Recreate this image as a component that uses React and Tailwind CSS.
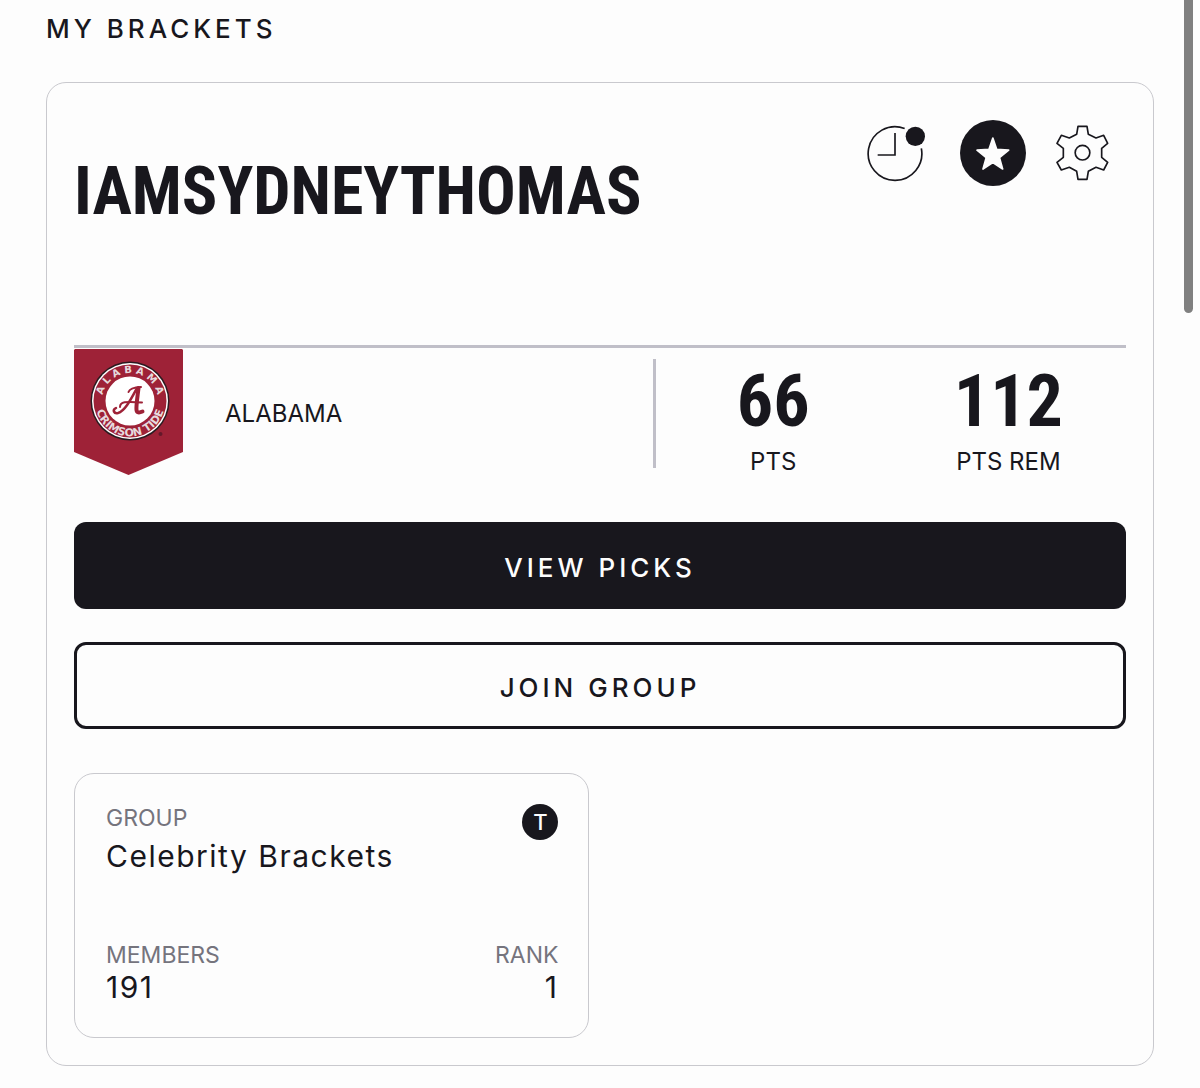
const GROUPS = [{ name: 'Celebrity Brackets', members: 191, rank: 1, badge: 'T' }]

const STATS = [
  { value: 66, label: 'PTS' },
  { value: 112, label: 'PTS REM' },
]

function ClockIcon() {
  return (
    <svg viewBox="52 70 177 174" className="w-[59px] h-[58px]" fill="none" stroke="#18171d" strokeWidth="5">
      <path d="M165 83.500A80.500 80.500 0 1 0 215 143" />
      <path d="M136 97V163H84" />
      <circle cx="197" cy="107" r="29" fill="#18171d" stroke="none" />
    </svg>
  )
}

function StarIcon() {
  return (
    <svg viewBox="380 109 102 99" className="w-[34px] h-[33px]" fill="#fdfdfd" stroke="#fdfdfd" strokeWidth="5" strokeLinejoin="round">
      <path d="M430.500 112L442 146L478 148.500L450.500 171L460 205L430.500 186L401 205L410.500 171L383 148.500L419 146Z" />
    </svg>
  )
}

function GearIcon() {
  return (
    <svg viewBox="618 75 159 168" className="w-[53px] h-[56px]" fill="none" stroke="#18171d" strokeWidth="5" strokeLinejoin="round">
      <path d="M684 79H711L715 103L738 114L761 106L773 130L755 145V172L773 187L761 210L738 202L715 214L711 238H684L680 214L658 202L634 210L621 187L640 172V145L621 130L634 106L658 114L680 103Z" />
      <circle cx="697.500" cy="158" r="22" />
    </svg>
  )
}

function TeamFlag() {
  return (
    <svg viewBox="0 0 109 126" className="mt-px h-[126px] w-[109px] shrink-0" role="img" aria-label="Alabama Crimson Tide">
      <defs>
        <path id="arcTop" d="M28.650 58A28 28 0 1 1 83.350 58" />
        <path id="arcBottom" d="M22 44A35 35 0 1 0 90 44" />
      </defs>
      <path d="M1 0H108L109 1V103L54.500 126L0 103V1Z" fill="#9e2237" />
      <circle cx="56" cy="52" r="39.500" fill="#2b1b20" />
      <circle cx="56" cy="52" r="38" fill="#fff" />
      <circle cx="56" cy="52" r="36.500" fill="#9e2237" />
      <circle cx="56" cy="52" r="24.500" fill="#fff" />
      <g fill="#e6dadd" fontFamily="DejaVu Sans" fontWeight="700" fontSize="10" textAnchor="middle">
        <text><textPath href="#arcTop" startOffset="50%">A L A B A M A</textPath></text>
        <text fontSize="11"><textPath href="#arcBottom" startOffset="50%">CRIMSON TIDE</textPath></text>
      </g>
      <g fill="none" stroke="#9e2237" strokeLinecap="round" strokeLinejoin="round">
        <path d="M42 59C38 61 40 65 44 64C51 62 57 50 63 39" strokeWidth="2.500" />
        <path d="M64.500 39C63.500 48 62 57 62.500 61Q63 65 68.500 62.500" strokeWidth="4" />
        <path d="M46 58C46 53 51 52 68 53.500" strokeWidth="2" />
        <path d="M54.500 43Q56 38.500 67 38" strokeWidth="2" />
      </g>
      <circle cx="86.500" cy="85" r="2" fill="#64182a" />
    </svg>
  )
}

function GroupCard({ group }) {
  return (
    <article className="w-[49%] rounded-[20px] border border-[#c9c9ce] pt-[30px] pr-[30px] pb-8 pl-[31px]">
      <div className="flex items-start justify-between">
        <div>
          <p className="text-[23px] leading-7 text-[#75747d]">GROUP</p>
          <h3 className="text-3xl leading-[48px] tracking-wider">{group.name}</h3>
        </div>
        <span className="flex size-9 items-center justify-center rounded-full bg-[#18171d] text-[22px] font-medium text-[#fdfdfd]">{group.badge}</span>
      </div>
      <dl className="mt-[61px] flex justify-between">
        <div>
          <dt className="text-[23px] leading-7 text-[#75747d]">MEMBERS</dt>
          <dd className="text-3xl leading-9 tracking-wider">{group.members}</dd>
        </div>
        <div className="text-right">
          <dt className="text-[23px] leading-7 text-[#75747d]">RANK</dt>
          <dd className="text-3xl leading-9 tracking-wider">{group.rank}</dd>
        </div>
      </dl>
    </article>
  )
}

export default function App() {
  return (
    <div className="relative min-h-screen bg-[#fdfdfd] px-[46px] pt-3 pb-[22px] font-['Inter','Liberation_Sans',sans-serif] text-[#18171d]">
      <h1 className="text-[26px] leading-[34px] font-medium tracking-[4px]">MY BRACKETS</h1>

      <section className="mt-9 rounded-[20px] border border-[#c9c9ce] px-[27px] pb-[27px]">
        <header className="flex h-[262px] items-start justify-between">
          <h2 className="pt-[73px] font-['Roboto_Condensed','Liberation_Sans_Narrow',sans-serif] text-[66px] leading-[72px] font-bold">IAMSYDNEYTHOMAS</h2>
          <div className="flex items-center pt-[37px] pr-[17px]">
            <button type="button" aria-label="Upcoming"><ClockIcon /></button>
            <button type="button" aria-label="Favorite" className="ml-[34px] flex size-[66px] items-center justify-center rounded-full bg-[#18171d]"><StarIcon /></button>
            <button type="button" aria-label="Settings" className="ml-[30px]"><GearIcon /></button>
          </div>
        </header>

        <div className="flex h-[177px] items-start border-t-3 border-[#c0bfc8]">
          <div className="flex flex-1 items-center">
            <TeamFlag />
            <span className="ml-[42px] pt-1 text-2xl">ALABAMA</span>
          </div>
          <dl className="mt-[11px] grid h-[109px] w-[45%] grid-cols-2 border-l-3 border-[#c0bfc8] text-center">
            {STATS.map(s => (
              <div key={s.label} className="flex flex-col-reverse justify-end">
                <dt className="mt-2.5 text-2xl leading-7">{s.label}</dt>
                <dd className="mt-[7px] font-['Roboto_Condensed','Liberation_Sans_Narrow',sans-serif] text-7xl leading-[72px] font-bold">{s.value}</dd>
              </div>
            ))}
          </dl>
        </div>

        <button type="button" className="h-[87px] w-full rounded-xl bg-[#18171d] pt-1 text-[26px] font-medium tracking-[4px] text-[#fdfdfd]">VIEW PICKS</button>
        <button type="button" className="mt-[33px] h-[87px] w-full rounded-xl border-3 border-[#18171d] pt-1 text-[26px] font-medium tracking-[4px]">JOIN GROUP</button>

        <div className="mt-[44px]">
          {GROUPS.map(g => <GroupCard key={g.name} group={g} />)}
        </div>
      </section>

      <div className="absolute top-0 right-[7px] h-[313px] w-[9px] rounded-b-full bg-[#808080]" />
    </div>
  )
}
